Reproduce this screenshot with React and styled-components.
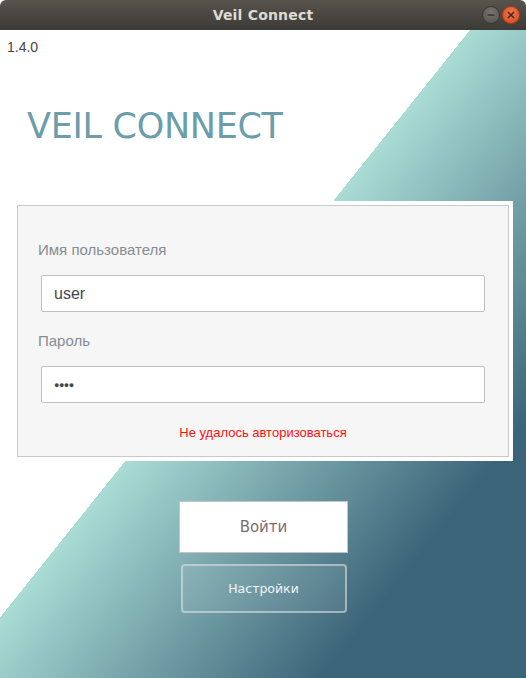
import React from 'react';
import styled, { createGlobalStyle } from 'styled-components';

const GlobalStyle = createGlobalStyle`
  html, body {
    margin: 0;
    padding: 0;
    background: #ffffff;
  }
  * {
    box-sizing: border-box;
  }
`;

const Window = styled.div`
  width: 526px;
  height: 678px;
  display: flex;
  flex-direction: column;
  overflow: hidden;
`;

const TitleBar = styled.header`
  height: 30px;
  flex: none;
  display: grid;
  grid-template-columns: 1fr auto 1fr;
  align-items: center;
  background: linear-gradient(to bottom, #57534d, #3d3b37);
  border-radius: 6px 6px 0 0;
  padding: 0 6px;
`;

const WindowTitle = styled.span`
  grid-column: 2;
  color: #dfdbd2;
  font-family: 'DejaVu Sans', sans-serif;
  font-weight: bold;
  font-size: 14px;
  letter-spacing: 0.2px;
`;

const Controls = styled.div`
  grid-column: 3;
  justify-self: end;
  display: flex;
  gap: 2px;
`;

const CircleButton = styled.span`
  width: 18px;
  height: 18px;
  border-radius: 50%;
  display: flex;
  align-items: center;
  justify-content: center;
  background: ${(p) =>
    p.$close
      ? 'radial-gradient(circle at 50% 35%, #f3754a, #d9481c)'
      : 'radial-gradient(circle at 50% 35%, #77746f, #55524d)'};
  border: 1px solid ${(p) => (p.$close ? '#b43c14' : '#3a3834')};
`;

const Main = styled.main`
  flex: 1;
  display: flex;
  flex-direction: column;
  background: linear-gradient(
    128.66deg,
    #ffffff 0%,
    #ffffff 45%,
    #aadcd5 45%,
    #3c6479 80.5%,
    #3c6479 100%
  );
`;

const Version = styled.div`
  padding: 9px 0 0 7px;
  height: 26px;
  font-family: 'Liberation Sans', Arial, sans-serif;
  font-size: 14px;
  color: #444444;
`;

const Brand = styled.h1`
  margin: 48px 0 0 27px;
  font-family: 'DejaVu Sans', sans-serif;
  font-weight: normal;
  font-size: 35px;
  line-height: 44px;
  color: #6b9daa;
  letter-spacing: -0.3px;
`;

const FormFrame = styled.div`
  margin: 53px 13px 0 13px;
  padding: 4px;
  background: #ffffff;
`;

const FormPanel = styled.div`
  height: 252px;
  border: 1px solid #c9c9c9;
  background: #f6f6f6;
  padding: 35px 23px 0 20px;
  display: flex;
  flex-direction: column;
`;

const Label = styled.label`
  font-family: 'Liberation Sans', Arial, sans-serif;
  font-size: 15px;
  color: #878c93;
  height: 18px;
  line-height: 18px;
  margin-bottom: ${(p) => p.$gap}px;
`;

const Field = styled.div`
  margin-left: 3px;
  height: 37px;
  background: #ffffff;
  border: 1px solid #c0c0c0;
  border-radius: 2px;
  display: flex;
  align-items: center;
  padding-left: 12px;
  font-family: 'Liberation Sans', Arial, sans-serif;
  font-size: ${(p) => (p.$secret ? '9px' : '16px')};
  color: #464646;
  margin-bottom: ${(p) => p.$gap}px;
  letter-spacing: ${(p) => (p.$secret ? '-0.5px' : '0')};
`;

const ErrorText = styled.div`
  text-align: center;
  font-family: 'Liberation Sans', Arial, sans-serif;
  font-size: 13px;
  color: #ff1010;
  margin-left: 3px;
`;

const Actions = styled.div`
  margin-top: 40px;
  display: flex;
  flex-direction: column;
  align-items: center;
  gap: 11px;
  padding-left: 1px;
`;

const LoginButton = styled.button`
  width: 169px;
  height: 52px;
  background: #ffffff;
  border: 1px solid #c4c4c4;
  border-radius: 0;
  font-family: 'DejaVu Sans', sans-serif;
  font-size: 15px;
  color: #7b6c70;
  padding: 0;
`;

const SettingsButton = styled.button`
  width: 166px;
  height: 49px;
  background: rgba(255, 255, 255, 0.08);
  border: 2px solid rgba(225, 230, 232, 0.55);
  border-radius: 4px;
  font-family: 'DejaVu Sans', sans-serif;
  font-size: 12.5px;
  color: #f2f4f5;
  padding: 0;
`;

export default function App() {
  return (
    <Window>
      <GlobalStyle />
      <TitleBar>
        <WindowTitle>Veil Connect</WindowTitle>
        <Controls>
          <CircleButton>
            <svg width="10" height="10" viewBox="0 0 10 10">
              <path d="M1.5 5h7" stroke="#3a3834" strokeWidth="1.6" />
            </svg>
          </CircleButton>
          <CircleButton $close>
            <svg width="10" height="10" viewBox="0 0 10 10">
              <path d="M2 2l6 6M8 2l-6 6" stroke="#3a2a22" strokeWidth="1.5" />
            </svg>
          </CircleButton>
        </Controls>
      </TitleBar>
      <Main>
        <Version>1.4.0</Version>
        <Brand>VEIL CONNECT</Brand>
        <FormFrame>
          <FormPanel>
            <Label $gap={16}>Имя пользователя</Label>
            <Field $gap={20}>user</Field>
            <Label $gap={16}>Пароль</Label>
            <Field $secret $gap={22}>●●●●</Field>
            <ErrorText>Не удалось авторизоваться</ErrorText>
          </FormPanel>
        </FormFrame>
        <Actions>
          <LoginButton>Войти</LoginButton>
          <SettingsButton>Настройки</SettingsButton>
        </Actions>
      </Main>
    </Window>
  );
}
